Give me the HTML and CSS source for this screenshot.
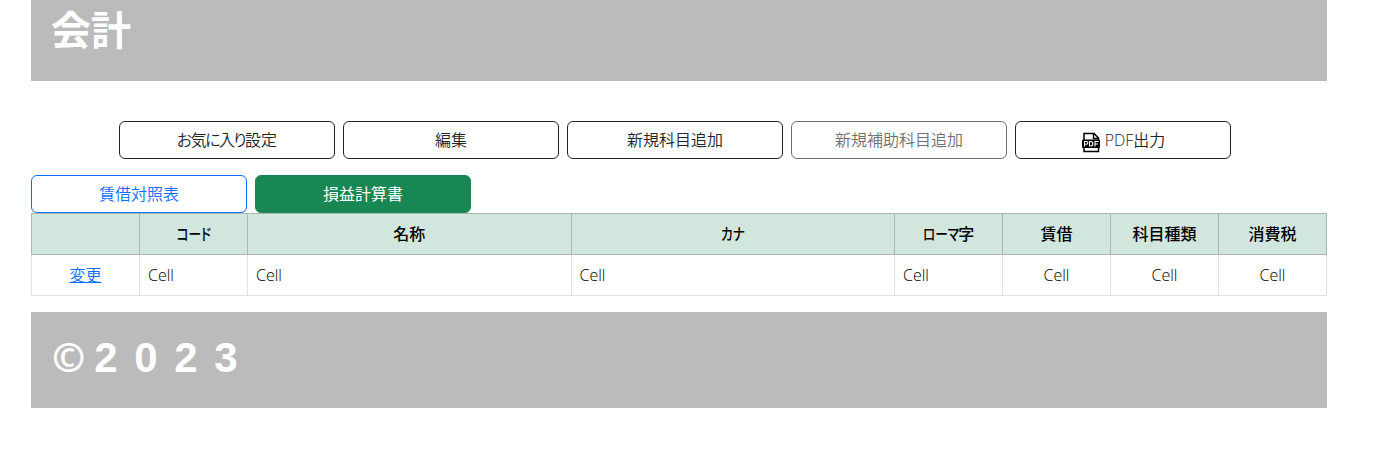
FILE: index.html
```html
<!DOCTYPE html>
<html lang="ja">
<head>
<meta charset="utf-8">
<title>会計</title>
<link rel="stylesheet" href="styles.css">
</head>
<body>
<div class="container">
  <header class="banner header"><h1 class="title">会計</h1></header>
  <nav class="toolbar">
    <button class="btn"><span><span class="fav">お気に入り</span>設定</span></button>
    <button class="btn">編集</button>
    <button class="btn">新規科目追加</button>
    <button class="btn" disabled>新規補助科目追加</button>
    <button class="btn"><svg class="pdf" viewBox="0 0 20 21" width="20" height="21"><path d="M3 8V1.500h10l4.500 4.500v2M12.500 1.500v5h5M3 15v4.500h14.500v-4.500" fill="none" stroke="#000" stroke-width="1.500"/><rect x="1" y="7.500" width="18" height="8.500" rx="1"/><path d="M3.500 14.500V9.500h2q1.300 0 1.300 1.300T5.500 12.200H3.500M8.500 9.500v4.500h1.300q2 0 2-2.200t-2-2.300zM14 14.500V9.500h3.500M14 12h3" fill="none" stroke="#fff" stroke-width="1.100"/></svg><span>PDF出力</span></button>
  </nav>
  <div class="tabs">
    <button class="btn primary">賃借対照表</button>
    <button class="btn success">損益計算書</button>
  </div>
  <table class="accounts">
    <colgroup><col class="c1"><col class="c1"><col class="c3"><col class="c3"><col class="c1"><col class="c1"><col class="c1"><col class="c1"></colgroup>
    <thead><tr><th></th><th><span class="kana">コード</span></th><th>名称</th><th><span class="kana">カナ</span></th><th><span class="kana roma">ローマ</span>字</th><th>賃借</th><th>科目種類</th><th>消費税</th></tr></thead>
    <tbody><tr><td class="center"><a href="#">変更</a></td><td>Cell</td><td>Cell</td><td>Cell</td><td>Cell</td><td class="center">Cell</td><td class="center">Cell</td><td class="center">Cell</td></tr></tbody>
  </table>
  <footer class="banner footer"><p class="copy">©<span class="year">2023</span></p></footer>
</div>
</body>
</html>
```
FILE: styles.css
```css
* { box-sizing: border-box; }
body {
  margin: 0;
  color: #212529;
  font: 350 16px/24px "Open Sans", "Noto Sans CJK JP", sans-serif;
}
.container { width: 1296px; margin-left: 31px; }
.banner { background: #bbb; color: #fff; padding-left: 21px; }
.header { height: 81px; padding: 6px 0 0 20px; }
.title, .copy { margin: 0; font-size: 40px; line-height: 48px; font-weight: 700; }
.year {
  margin-left: 9px;
  font-family: "Liberation Sans", sans-serif;
  font-size: 42px;
  letter-spacing: 16.6px;
}
.toolbar { display: flex; justify-content: center; gap: 8px; margin-top: 40px; padding-right: 8px; }
.tabs { display: flex; gap: 8px; margin-top: 16px; }
.btn {
  display: flex;
  align-items: center;
  justify-content: center;
  width: 216px;
  height: 38px;
  padding: 0;
  border: 1px solid #212529;
  border-radius: 6px;
  background: #fff;
  color: #212529;
  font: inherit;
}
.btn:disabled { opacity: .65; }
.primary { color: #0d6efd; border-color: #0d6efd; }
.success { color: #fff; background: #198754; border-color: #198754; font-weight: 400; }
.pdf { margin: 4px 4px 0 0; }
.fav { font-feature-settings: "palt"; letter-spacing: -1.6px; }
.kana { display: inline-block; font-feature-settings: "palt"; transform: scaleX(.79); }
.roma { margin-right: -10px; transform-origin: left; }
.accounts { width: 1296px; table-layout: fixed; border-collapse: collapse; color: #000; }
.c1 { width: 108px; }
.c3 { width: 323.5px; }
.accounts { width: 1295.5px; }
.accounts th, .accounts td { height: 41px; padding: 8px; border: 1px solid #dee2e6; text-align: left; }
.accounts th { background: #d1e7dd; border-color: #a7b9b1; text-align: center; font-weight: 500; }
.accounts .center { text-align: center; }
.accounts a { color: #0d6efd; }
.footer { height: 96px; margin-top: 16px; padding-top: 21px; }
```
